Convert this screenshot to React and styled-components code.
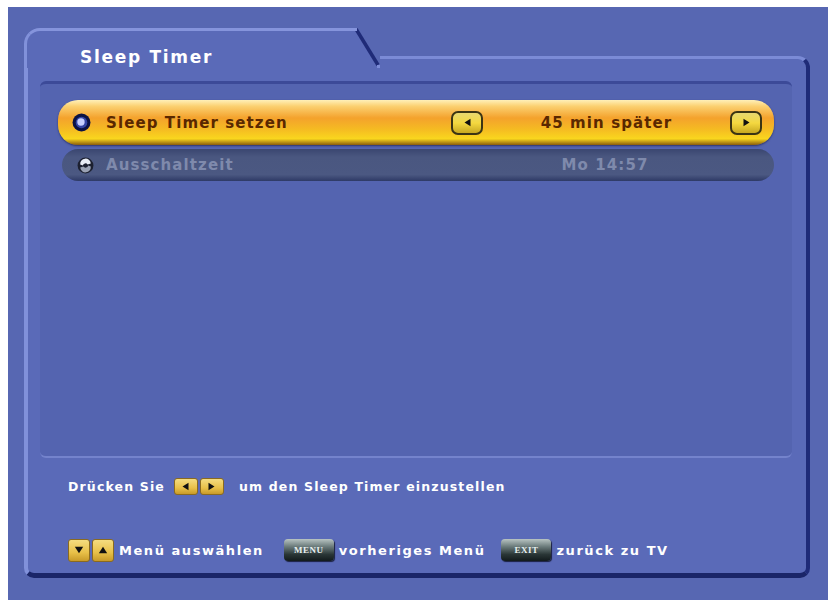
import styled, { createGlobalStyle } from "styled-components";

const Global = createGlobalStyle`
  html, body { margin: 0; padding: 0; background: #ffffff; }
  body { font-family: "DejaVu Sans", "Liberation Sans", sans-serif; }
`;

const Screen = styled.div`
  box-sizing: border-box;
  margin: 7px 0 0 8px;
  width: 820px;
  height: 593px;
  background: #5767b2;
  padding: 21px 18px 0 16px;
`;

const Panel = styled.div`
  width: 786px;
  display: flex;
  flex-direction: column;
`;

const Header = styled.div`
  height: 40px;
  display: flex;
  align-items: flex-end;
`;

const Tab = styled.div`
  box-sizing: border-box;
  width: 330px;
  height: 40px;
  background: #5a6ab8;
  border-top: 3px solid #8594dc;
  border-left: 3px solid #8191da;
  border-top-left-radius: 16px;
  padding: 17px 0 0 53px;
  color: #ffffff;
  font-size: 17px;
  font-weight: bold;
  letter-spacing: 1.7px;
  line-height: 18px;
`;

const Slant = styled.svg`
  display: block;
  width: 26px;
  height: 40px;
  flex: none;
`;

const Shoulder = styled.div`
  box-sizing: border-box;
  flex: 1;
  height: 12px;
  background: #5a6ab8;
  border-top: 3px solid #7b8bd6;
  border-right: 4px solid #1f2b78;
  border-top-right-radius: 12px;
`;

const Body = styled.div`
  box-sizing: border-box;
  height: 510px;
  background: #5a6ab8;
  border-left: 4px solid #8191da;
  border-right: 4px solid #1f2b78;
  border-bottom: 5px solid #1a2568;
  border-radius: 0 0 10px 10px;
  padding: 13px 14px 0 12px;
  display: flex;
  flex-direction: column;
`;

const Content = styled.div`
  box-sizing: border-box;
  height: 377px;
  background: #5464b0;
  border-top: 3px solid #3c4a98;
  border-bottom: 2px solid #7483cc;
  border-radius: 6px;
  padding: 16px 18px 0 18px;
  display: flex;
  flex-direction: column;
  gap: 4px;
`;

const Row = styled.div`
  box-sizing: border-box;
  height: ${(p) => (p.active ? "45px" : "32px")};
  border-radius: 20px;
  display: flex;
  align-items: center;
  padding: 0 12px 0 14px;
  font-size: 15px;
  font-weight: bold;
  letter-spacing: 1.1px;
  background: ${(p) =>
    p.active
      ? "linear-gradient(180deg, #fff0b8 0%, #fbd070 14%, #f4a22c 40%, #f5bb22 65%, #f9d61e 86%, #8a5c0c 100%)"
      : "linear-gradient(180deg, #3a4670 0%, #4a5780 25%, #4b5882 80%, #2e3a66 100%)"};
  color: ${(p) => (p.active ? "#5a2800" : "#7f8aac")};
  box-shadow: ${(p) => (p.active ? "0 1px 2px rgba(20,20,60,0.6)" : "none")};
  margin-left: ${(p) => (p.active ? "0" : "4px")};
`;

const Label = styled.span`
  margin-left: ${(p) => (p.dim ? "11px" : "15px")};
  width: ${(p) => (p.dim ? "342px" : "345px")};
`;

const ValueArea = styled.div`
  flex: 1;
  display: flex;
  align-items: center;
  justify-content: space-between;
`;

const Value = styled.span`
  flex: 1;
  text-align: center;
`;

const Bullet = ({ active }) => (
  <svg width="19" height="19" viewBox="0 0 18 18">
    {active ? (
      <>
        <circle cx="9" cy="9" r="8.5" fill="#0c1244" />
        <circle cx="9" cy="9" r="5.5" fill="#3444a4" />
        <circle cx="8.5" cy="8.5" r="3.5" fill="#c8d0ff" />
      </>
    ) : (
      <>
        <circle cx="9" cy="9" r="7.5" fill="#1c2030" />
        <path d="M4 8 A5 5 0 0 1 14 7 L11 8 A2.5 2.5 0 0 0 6.5 9 Z" fill="#e8ecf4" />
        <path d="M14 10 A5 5 0 0 1 4 11 L7 10 A2.5 2.5 0 0 0 11.5 9 Z" fill="#9aa2b4" />
      </>
    )}
  </svg>
);

const ArrowKey = styled.span`
  box-sizing: border-box;
  width: 32px;
  height: 24px;
  border: 2px solid #3b3414;
  border-radius: 7px;
  background: linear-gradient(180deg, #e8d870 0%, #f4d840 50%, #c8a820 100%);
  display: flex;
  align-items: center;
  justify-content: center;
`;

const Tri = ({ dir, size = 9 }) => {
  const pts = {
    left: "10,1 10,11 2,6",
    right: "2,1 2,11 10,6",
    up: "6,2 11,10 1,10",
    down: "1,2 11,2 6,10",
  }[dir];
  return (
    <svg width={size} height={size} viewBox="0 0 12 12">
      <polygon points={pts} fill="#111" />
    </svg>
  );
};

const Hints = styled.div`
  flex: 1;
  display: flex;
  flex-direction: column;
  padding: 16px 0 0 28px;
  color: #ffffff;
  font-weight: bold;
`;

const HintLine = styled.div`
  display: flex;
  align-items: center;
  font-size: 12.5px;
  letter-spacing: 1.15px;
  height: 24px;
  margin-top: ${(p) => p.top || "0"};
`;

const KeyPair = styled.span`
  display: inline-flex;
  gap: 2px;
  margin: ${(p) => p.margin || "0 15px 0 9px"};
`;

const YellowKey = styled.span`
  box-sizing: border-box;
  width: ${(p) => p.w || "24px"};
  height: ${(p) => p.h || "17px"};
  background: linear-gradient(180deg, #f4dc80 0%, #e8c048 60%, #c89a28 100%);
  border: 1px solid #8a6a20;
  border-radius: 3px;
  display: flex;
  align-items: center;
  justify-content: center;
`;

const DarkKey = styled.span`
  box-sizing: border-box;
  width: 50px;
  height: 22px;
  border-radius: 4px;
  background: linear-gradient(180deg, #b8c4c2 0%, #6a7a7a 35%, #2a3636 70%, #121a1c 100%);
  color: #e8f0f0;
  font-family: "Liberation Serif", serif;
  font-size: 9px;
  letter-spacing: 0.5px;
  display: flex;
  align-items: center;
  justify-content: center;
  margin: 0 5px 0 ${(p) => p.gap || "20px"};
  box-shadow: 1px 1px 1px #1a2040;
`;

const FootText = styled.span`
  font-size: 13px;
  letter-spacing: 1.55px;
`;

export default function App() {
  return (
    <>
      <Global />
      <Screen>
        <Panel>
          <Header>
            <Tab>Sleep Timer</Tab>
            <Slant viewBox="0 0 26 40">
              <polygon points="0,0 2,0 24,36 24,40 0,40" fill="#5a6ab8" />
              <polygon points="0,3 2,0 4,1 26,37 26,40 24,40" fill="#5a6ab8" />
              <line x1="2" y1="1" x2="24" y2="37" stroke="#1f2b78" strokeWidth="3.5" />
              <rect x="0" y="0" width="3" height="3" fill="#8594dc" />
              <rect x="23" y="37" width="3" height="3" fill="#7b8bd6" />
            </Slant>
            <Shoulder />
          </Header>
          <Body>
            <Content>
              <Row active>
                <Bullet active />
                <Label>Sleep Timer setzen</Label>
                <ValueArea>
                  <ArrowKey>
                    <Tri dir="left" />
                  </ArrowKey>
                  <Value>45 min später</Value>
                  <ArrowKey>
                    <Tri dir="right" />
                  </ArrowKey>
                </ValueArea>
              </Row>
              <Row>
                <Bullet />
                <Label dim>Ausschaltzeit</Label>
                <ValueArea>
                  <Value>Mo 14:57</Value>
                </ValueArea>
              </Row>
            </Content>
            <Hints>
              <HintLine>
                Drücken Sie
                <KeyPair>
                  <YellowKey>
                    <Tri dir="left" size={9} />
                  </YellowKey>
                  <YellowKey>
                    <Tri dir="right" size={9} />
                  </YellowKey>
                </KeyPair>
                um den Sleep Timer einzustellen
              </HintLine>
              <HintLine top="40px">
                <KeyPair margin="0 5px 0 0">
                  <YellowKey w="22px" h="23px">
                    <Tri dir="down" size={10} />
                  </YellowKey>
                  <YellowKey w="22px" h="23px">
                    <Tri dir="up" size={10} />
                  </YellowKey>
                </KeyPair>
                <FootText>Menü auswählen</FootText>
                <DarkKey>MENU</DarkKey>
                <FootText>vorheriges Menü</FootText>
                <DarkKey gap="16px">EXIT</DarkKey>
                <FootText>zurück zu TV</FootText>
              </HintLine>
            </Hints>
          </Body>
        </Panel>
      </Screen>
    </>
  );
}
